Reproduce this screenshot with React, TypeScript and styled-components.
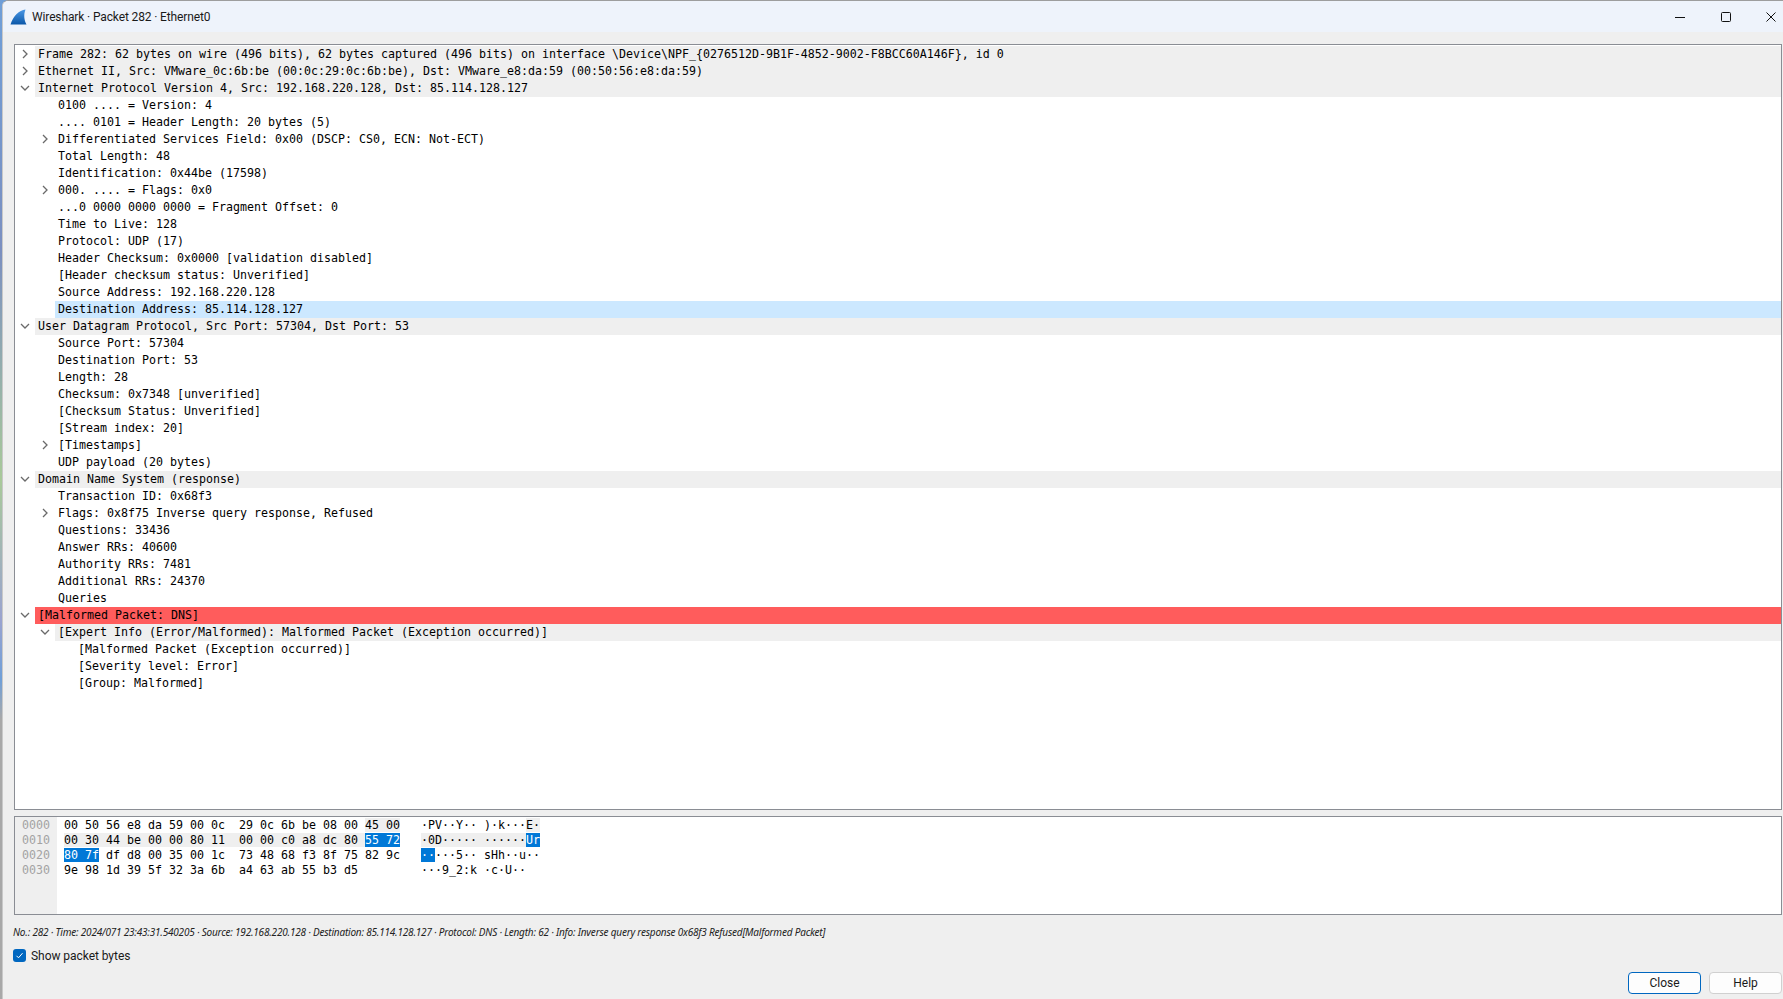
import React from "react";
import styled, { createGlobalStyle } from "styled-components";

const Global = createGlobalStyle`
  html, body { margin: 0; padding: 0; width: 100%; height: 100%; overflow: hidden; background: #efefef; }
  #root { width: 1783px; height: 999px; }
  * { box-sizing: border-box; }
`;

const Screen = styled.div`
  width: 1783px; height: 999px; display: flex;
  background: linear-gradient(180deg, #6f9fd8 0%, #7b8fc0 25%, #a9c99a 48%, #9aa3cf 62%, #6f9fd8 68%, #a8a8a8 72%, #a8a8a8 100%);
`;
const Win = styled.div`
  margin-left: 2px; flex: 1; min-width: 0; display: flex; flex-direction: column;
  background: #efefef; border-top: 1px solid #9d9d9d; border-left: 1px solid #c8c8c8;
  border-top-left-radius: 6px; overflow: hidden;
`;
const TitleBar = styled.div`
  height: 31px; background: #eef3fb; display: flex; align-items: center; padding: 0 2px 0 7px;
  font: 12px "Roboto", sans-serif; color: #1a1a1a; flex: none; letter-spacing: -0.13px;
`;
const TitleText = styled.span` margin-left: 5px; flex: 1; `;
const WinControls = styled.div` display: flex; gap: 25.5px; `;
const WinBtn = styled.div`
  width: 20px; height: 31px; display: flex; align-items: center; justify-content: center;
`;
const Content = styled.div`
  flex: 1; min-height: 0; display: flex; flex-direction: column; padding: 12px 0 0 10px;
`;
const Tree = styled.div`
  height: 766px; flex: none; margin: 0 1px; padding-top: 1px; border: 1px solid #8a8d94; background: #fff; overflow: hidden;
`;
const Row = styled.div<{ $kind?: string; $level: number }>`
  height: 17px; display: flex; align-items: center; white-space: pre; position: relative;
  font: 11.63px/17px "DejaVu Sans Mono", monospace; color: #000;
  padding-left: ${(p) => 20 + p.$level * 20}px;
  background: ${(p) =>
    p.$kind === "bad" ? "#ff5c5c" : p.$kind === "sel" ? "#cce8ff" : p.$kind === "head" ? "#efefef" : "transparent"};
  background-clip: content-box;
`;
const RowLabel = styled.span`
  flex: 1; padding-left: 3px;
`;
const Chevron = styled.svg<{ $level: number }>`
  position: absolute; top: 3px; left: ${(p) => 5 + p.$level * 20}px; width: 10px; height: 10px;
  fill: none; stroke: #6a6a6a; stroke-width: 1.3;
`;
const Hex = styled.div`
  margin: 6px 1px 0; height: 99px; flex: none; border: 1px solid #8a8d94; background: #fff; display: flex;
  font: 11.63px/15px "DejaVu Sans Mono", monospace; color: #000;
`;
const Gutter = styled.div`
  width: 42px; flex: none; background: #efefef; color: #a3a3a3; padding: 1px 0 0 7px; white-space: pre;
`;
const HexBody = styled.div`
  padding: 1px 0 0 7px; white-space: pre;
`;
const HexRow = styled.div` height: 15px; display: flex; `;
const HexGap = styled.span` width: 21px; flex: none; `;
const HexColumn = styled.span` width: 336px; flex: none; `;
const Cell = styled.span<{ $mark?: string }>`
  background: ${(p) => (p.$mark === "sel" ? "#0078d7" : p.$mark === "grey" ? "#efefef" : "transparent")};
  color: ${(p) => (p.$mark === "sel" ? "#fff" : "#000")};
`;
const Info = styled.div`
  height: 32px; display: flex; align-items: center; padding: 2px 0 0 0; flex: none;
  font: italic 10px "Noto Sans", sans-serif; color: #222;
  letter-spacing: -0.2px;
`;
const CheckRow = styled.label`
  display: flex; align-items: center; gap: 5px; margin-top: 2px; height: 13px; flex: none;
  font: 12px "Roboto", sans-serif; color: #1a1a1a; letter-spacing: -0.05px;
`;
const Check = styled.span`
  width: 13px; height: 13px; border-radius: 3px; background: #0067c0; display: flex; align-items: center; justify-content: center;
`;
const Buttons = styled.div`
  display: flex; justify-content: flex-end; gap: 8px; margin-top: 10px; padding-right: 1px; flex: none;
`;
const Btn = styled.button<{ $primary?: boolean }>`
  width: 73px; height: 22px; border-radius: 4px; padding: 0; background: #fdfdfd;
  border: 1px solid ${(p) => (p.$primary ? "#0067c0" : "#d0d0d0")};
  font: 12px "Roboto", sans-serif; color: #1a1a1a;
`;

type R = { t: string; l: number; c?: "open" | "closed"; k?: string };
const rows: R[] = [
  { t: "Frame 282: 62 bytes on wire (496 bits), 62 bytes captured (496 bits) on interface \\Device\\NPF_{0276512D-9B1F-4852-9002-F8BCC60A146F}, id 0", l: 0, c: "closed", k: "head" },
  { t: "Ethernet II, Src: VMware_0c:6b:be (00:0c:29:0c:6b:be), Dst: VMware_e8:da:59 (00:50:56:e8:da:59)", l: 0, c: "closed", k: "head" },
  { t: "Internet Protocol Version 4, Src: 192.168.220.128, Dst: 85.114.128.127", l: 0, c: "open", k: "head" },
  { t: "0100 .... = Version: 4", l: 1 },
  { t: ".... 0101 = Header Length: 20 bytes (5)", l: 1 },
  { t: "Differentiated Services Field: 0x00 (DSCP: CS0, ECN: Not-ECT)", l: 1, c: "closed" },
  { t: "Total Length: 48", l: 1 },
  { t: "Identification: 0x44be (17598)", l: 1 },
  { t: "000. .... = Flags: 0x0", l: 1, c: "closed" },
  { t: "...0 0000 0000 0000 = Fragment Offset: 0", l: 1 },
  { t: "Time to Live: 128", l: 1 },
  { t: "Protocol: UDP (17)", l: 1 },
  { t: "Header Checksum: 0x0000 [validation disabled]", l: 1 },
  { t: "[Header checksum status: Unverified]", l: 1 },
  { t: "Source Address: 192.168.220.128", l: 1 },
  { t: "Destination Address: 85.114.128.127", l: 1, k: "sel" },
  { t: "User Datagram Protocol, Src Port: 57304, Dst Port: 53", l: 0, c: "open", k: "head" },
  { t: "Source Port: 57304", l: 1 },
  { t: "Destination Port: 53", l: 1 },
  { t: "Length: 28", l: 1 },
  { t: "Checksum: 0x7348 [unverified]", l: 1 },
  { t: "[Checksum Status: Unverified]", l: 1 },
  { t: "[Stream index: 20]", l: 1 },
  { t: "[Timestamps]", l: 1, c: "closed" },
  { t: "UDP payload (20 bytes)", l: 1 },
  { t: "Domain Name System (response)", l: 0, c: "open", k: "head" },
  { t: "Transaction ID: 0x68f3", l: 1 },
  { t: "Flags: 0x8f75 Inverse query response, Refused", l: 1, c: "closed" },
  { t: "Questions: 33436", l: 1 },
  { t: "Answer RRs: 40600", l: 1 },
  { t: "Authority RRs: 7481", l: 1 },
  { t: "Additional RRs: 24370", l: 1 },
  { t: "Queries", l: 1 },
  { t: "[Malformed Packet: DNS]", l: 0, c: "open", k: "bad" },
  { t: "[Expert Info (Error/Malformed): Malformed Packet (Exception occurred)]", l: 1, c: "open", k: "head" },
  { t: "[Malformed Packet (Exception occurred)]", l: 2 },
  { t: "[Severity level: Error]", l: 2 },
  { t: "[Group: Malformed]", l: 2 },
];

type Seg = [string, string?];
const hexRows: { off: string; hex: Seg[]; asc: Seg[] }[] = [
  {
    off: "0000",
    hex: [["00 50 56 e8 da 59 00 0c  29 0c 6b be 08 00 "], ["45 00", "grey"]],
    asc: [["·PV··Y·· )·k···"], ["E·", "grey"]],
  },
  {
    off: "0010",
    hex: [["00 30 44 be 00 00 80 11  00 00 c0 a8 dc 80 ", "grey"], ["55 72", "sel"]],
    asc: [["·0D····· ······", "grey"], ["Ur", "sel"]],
  },
  {
    off: "0020",
    hex: [["80 7f", "sel"], [" df d8 00 35 00 1c  73 48 68 f3 8f 75 82 9c"]],
    asc: [["··", "sel"], ["···5·· sHh··u··"]],
  },
  {
    off: "0030",
    hex: [["9e 98 1d 39 5f 32 3a 6b  a4 63 ab 55 b3 d5"]],
    asc: [["···9_2:k ·c·U··"]],
  },
];

const Logo = () => (
  <svg width="17" height="16" viewBox="0 0 17 16" aria-hidden="true">
    <defs>
      <linearGradient id="fin" x1="0" y1="0" x2="0" y2="1">
        <stop offset="0" stopColor="#4a98e6" />
        <stop offset="1" stopColor="#0b57a8" />
      </linearGradient>
    </defs>
    <path d="M15.5 0.5 C9 1.5 3.5 6.5 0.5 15.5 L16.5 15.5 C14 11 13.5 5.5 15.5 0.5 Z" fill="url(#fin)" />
  </svg>
);

export default function App() {
  return (
    <Screen>
      <Global />
      <Win>
        <TitleBar>
          <Logo />
          <TitleText>Wireshark · Packet 282 · Ethernet0</TitleText>
          <WinControls>
            <WinBtn>
              <svg width="10" height="10" viewBox="0 0 10 10"><path d="M0 5.5H10" stroke="#111" fill="none" /></svg>
            </WinBtn>
            <WinBtn>
              <svg width="10" height="10" viewBox="0 0 10 10"><rect x=".5" y=".5" width="9" height="9" rx="1" stroke="#111" fill="none" /></svg>
            </WinBtn>
            <WinBtn>
              <svg width="10" height="10" viewBox="0 0 10 10"><path d="M.5.5l9 9M9.5.5l-9 9" stroke="#111" fill="none" /></svg>
            </WinBtn>
          </WinControls>
        </TitleBar>
        <Content>
          <Tree>
            {rows.map((r, i) => (
              <Row key={i} $kind={r.k} $level={r.l}>
                {r.c && (
                  <Chevron $level={r.l} viewBox="0 0 10 10">
                    <path d={r.c === "open" ? "M1 3l4 4 4-4" : "M3 1l4 4-4 4"} />
                  </Chevron>
                )}
                <RowLabel>{r.t}</RowLabel>
              </Row>
            ))}
          </Tree>
          <Hex>
            <Gutter>{hexRows.map((h) => h.off).join("\n")}</Gutter>
            <HexBody>
              {hexRows.map((h) => (
                <HexRow key={h.off}>
                  <HexColumn>
                    {h.hex.map((s, i) => <Cell key={i} $mark={s[1]}>{s[0]}</Cell>)}
                  </HexColumn>
                  <HexGap />
                  <span>
                    {h.asc.map((s, i) => <Cell key={i} $mark={s[1]}>{s[0]}</Cell>)}
                  </span>
                </HexRow>
              ))}
            </HexBody>
          </Hex>
          <Info>No.: 282 · Time: 2024/071 23:43:31.540205 · Source: 192.168.220.128 · Destination: 85.114.128.127 · Protocol: DNS · Length: 62 · Info: Inverse query response 0x68f3 Refused[Malformed Packet]</Info>
          <CheckRow>
            <Check>
              <svg width="9" height="9" viewBox="0 0 9 9"><path d="M1.5 4.8l2 2 4-4.6" stroke="#fff" strokeWidth="1" fill="none" /></svg>
            </Check>
            Show packet bytes
          </CheckRow>
          <Buttons>
            <Btn $primary>Close</Btn>
            <Btn>Help</Btn>
          </Buttons>
        </Content>
      </Win>
    </Screen>
  );
}
